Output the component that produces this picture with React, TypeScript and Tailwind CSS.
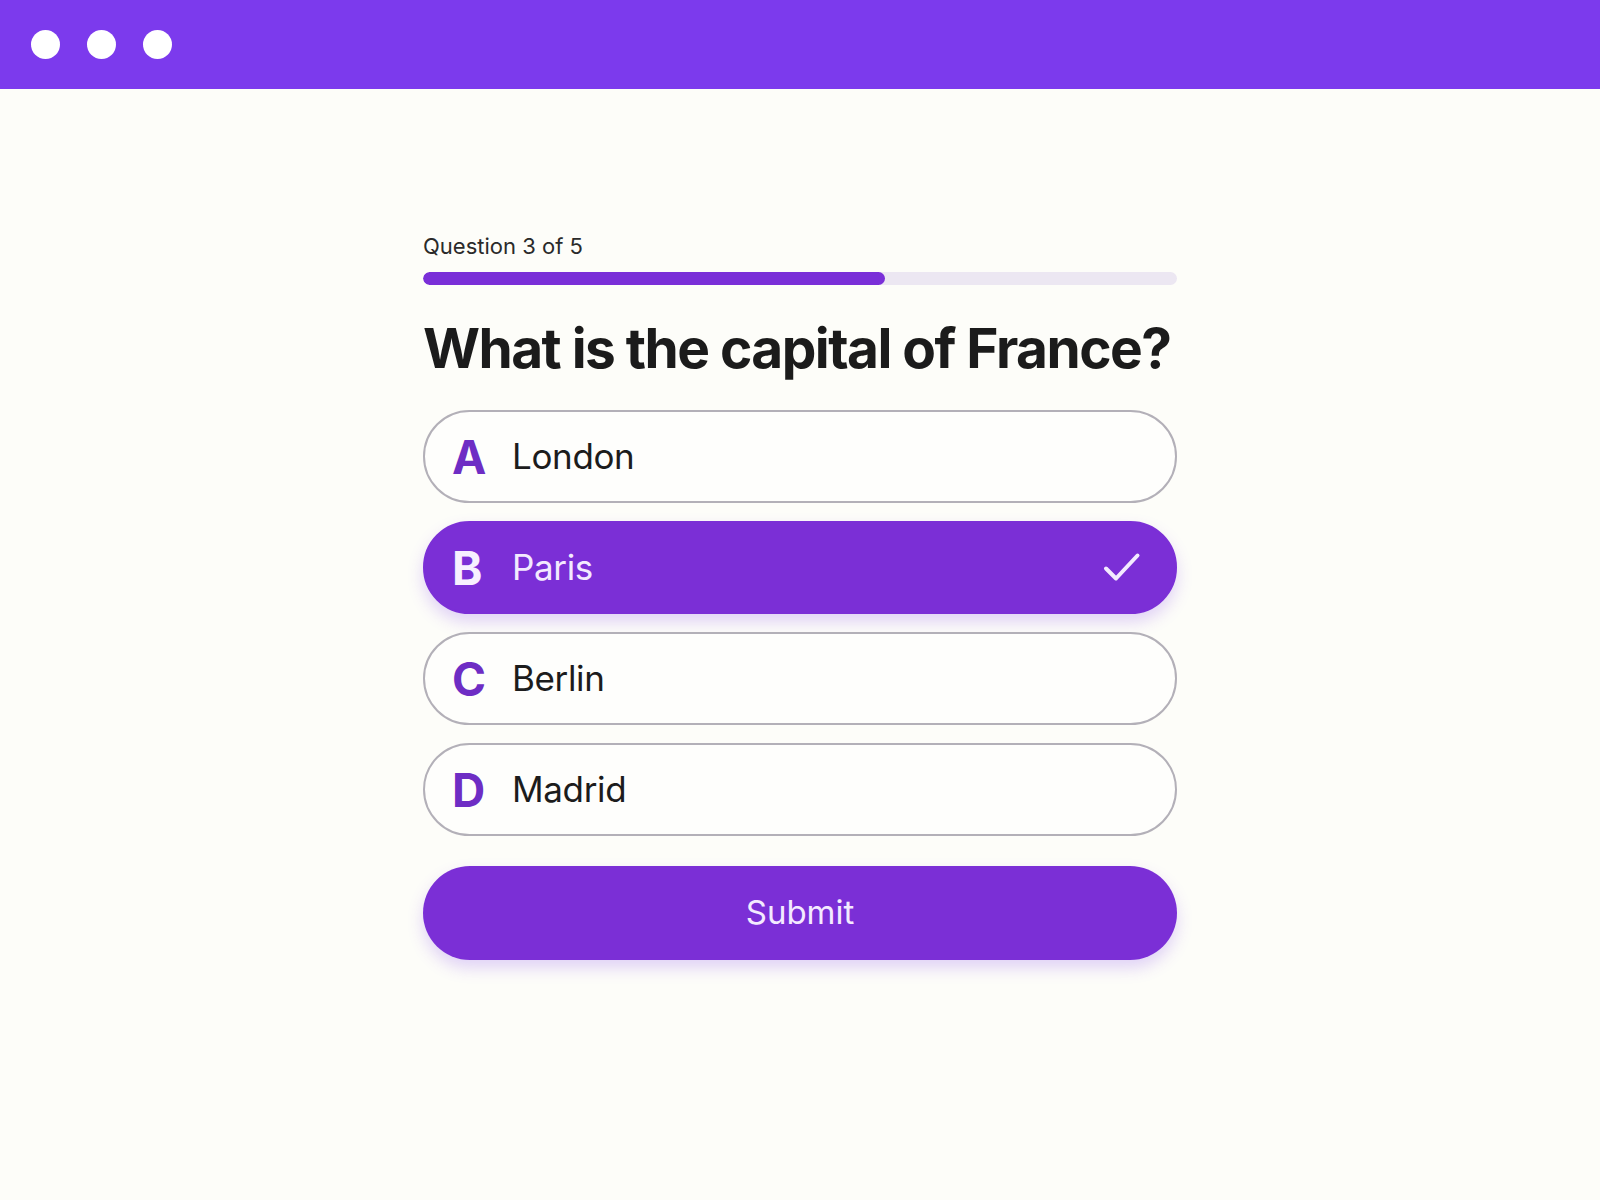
import { useState } from 'react';

const OPTIONS = [
  { key: 'A', label: 'London' },
  { key: 'B', label: 'Paris' },
  { key: 'C', label: 'Berlin' },
  { key: 'D', label: 'Madrid' },
];

function Check() {
  return (
    <svg width="40" height="34" viewBox="0 0 40 34" fill="none" aria-hidden="true">
      <path
        d="M4 17.5 L14 27.5 L35.5 4.5"
        stroke="#f3eaff"
        strokeWidth="4"
        strokeLinecap="round"
        strokeLinejoin="round"
      />
    </svg>
  );
}

export default function App() {
  const [selected, setSelected] = useState('B');

  return (
    <div className="min-h-screen bg-[#fdfdf9]" style={{ fontFamily: 'Inter, "Noto Sans", sans-serif' }}>
      <header className="h-[89px] bg-[#7c3aed] flex items-center gap-[27px] pl-[31px]">
        <span className="w-[29px] h-[29px] rounded-full bg-white" />
        <span className="w-[29px] h-[29px] rounded-full bg-white" />
        <span className="w-[29px] h-[29px] rounded-full bg-white" />
      </header>

      <main className="w-[754px] mx-auto pt-[143px] pb-20">
        <p className="text-[22px] leading-[28px] text-[#2a2a2a]">Question 3 of 5</p>
        <div className="mt-[12px] h-[13px] rounded-full bg-[#ece7f2] overflow-hidden">
          <div className="h-full w-[462px] rounded-full bg-[#7a2fd8]" />
        </div>

        <h1 className="mt-[30px] text-[55px] leading-[66px] font-bold text-[#1b1b1b] tracking-[-0.028em] whitespace-nowrap">
          What is the capital of France?
        </h1>

        <div className="mt-[29px] flex flex-col gap-[18px]">
          {OPTIONS.map((opt) => {
            const active = opt.key === selected;
            return (
              <button
                key={opt.key}
                onClick={() => setSelected(opt.key)}
                className={
                  active
                    ? 'h-[93px] rounded-full border-2 border-[#7b2fd6] bg-[#7b2fd6] flex items-center pl-[27px] pr-[33px] text-left shadow-[0_8px_16px_rgba(124,58,237,0.22)]'
                    : 'h-[93px] rounded-full border-2 border-[#b3b0b8] bg-[#fefefc] flex items-center pl-[27px] pr-[33px] text-left'
                }
              >
                <span
                  className={
                    active
                      ? 'w-[60px] text-[46px] leading-none font-bold text-[#f7f0ff]'
                      : 'w-[60px] text-[46px] leading-none font-bold text-[#6e2dc4]'
                  }
                >
                  {opt.key}
                </span>
                <span
                  className={
                    active
                      ? 'flex-1 text-[35px] leading-none tracking-[-0.01em] text-[#f3eaff]'
                      : 'flex-1 text-[35px] leading-none tracking-[-0.01em] text-[#1c1c1c]'
                  }
                >
                  {opt.label}
                </span>
                {active && <Check />}
              </button>
            );
          })}
        </div>

        <button className="mt-[30px] w-full h-[94px] rounded-full bg-[#7b2fd6] text-[33px] text-[#f3eaff] shadow-[0_8px_16px_rgba(124,58,237,0.22)]">
          Submit
        </button>
      </main>
    </div>
  );
}
